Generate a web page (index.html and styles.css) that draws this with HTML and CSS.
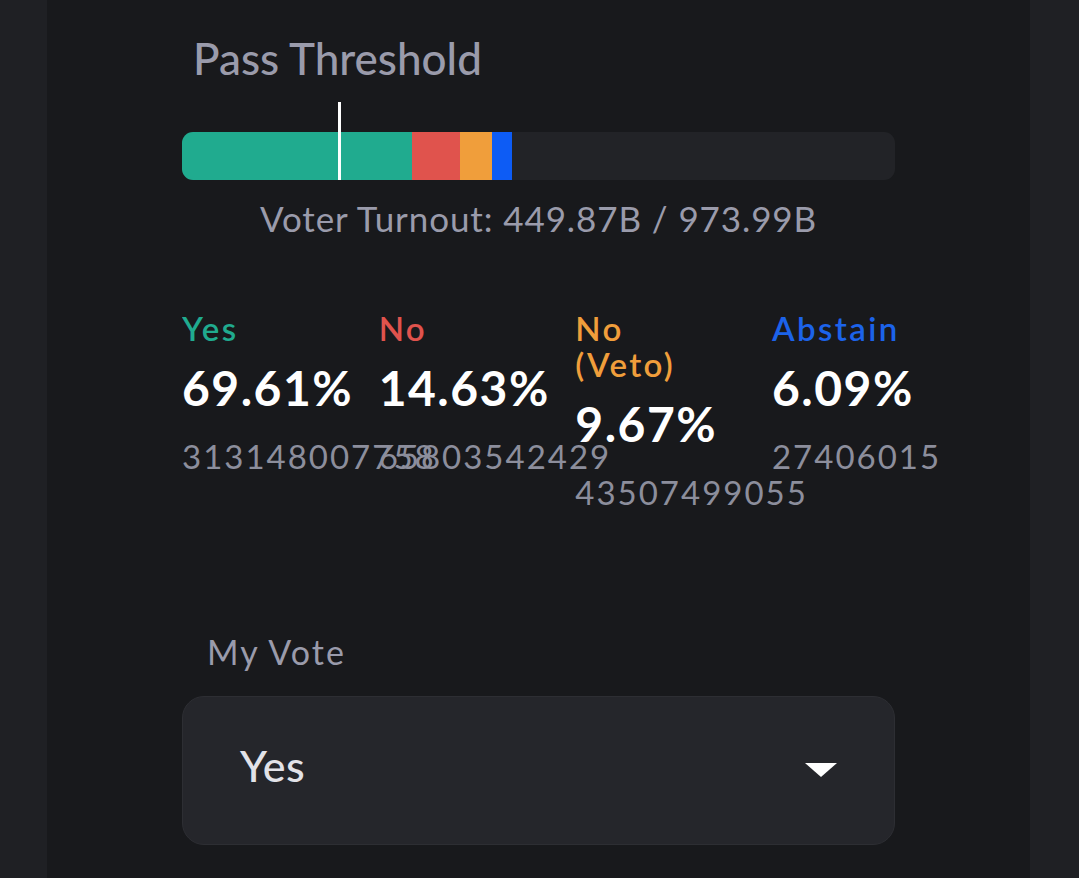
FILE: index.html
```html
<!DOCTYPE html>
<html>
<head>
<meta charset="utf-8">
<link rel="stylesheet" href="styles.css">
</head>
<body>
<div class="page">
  <div class="panel">
    <h2 class="threshold-title">Pass Threshold</h2>
    <div class="bar-wrap">
      <div class="bar">
        <div class="seg seg-yes" style="width:229.6px"></div>
        <div class="seg seg-no" style="width:48px"></div>
        <div class="seg seg-veto" style="width:32px"></div>
        <div class="seg seg-abstain" style="width:20px"></div>
      </div>
      <div class="threshold-line" style="left:156px"></div>
    </div>
    <div class="turnout">Voter Turnout: 449.87B / 973.99B</div>

    <div class="stats">
      <div class="stat">
        <div class="stat-label yes">Yes</div>
        <div class="stat-pct">69.61%</div>
        <div class="stat-num">313148007758</div>
      </div>
      <div class="stat">
        <div class="stat-label no">No</div>
        <div class="stat-pct">14.63%</div>
        <div class="stat-num">65803542429</div>
      </div>
      <div class="stat">
        <div class="stat-label veto">No<br>(Veto)</div>
        <div class="stat-pct">9.67%</div>
        <div class="stat-num">43507499055</div>
      </div>
      <div class="stat">
        <div class="stat-label abstain">Abstain</div>
        <div class="stat-pct">6.09%</div>
        <div class="stat-num">27406015715</div>
      </div>
    </div>

    <div class="vote-label">My Vote</div>
    <div class="select">
      <span class="select-value">Yes</span>
      <span class="caret"></span>
    </div>
  </div>
</div>
</body>
</html>
```

FILE: styles.css
```css
html, body {
  margin: 0;
  padding: 0;
  background: #1f2024;
  font-family: Lato, "Noto Sans", sans-serif;
}
.page {
  padding: 0 49px 0 47px;
  height: 878px;
  overflow: hidden;
}
.panel {
  background: #18191c;
  height: 878px;
  padding: 0 0 0 135px;
  box-sizing: border-box;
}
.threshold-title {
  margin: 0;
  padding: 32px 0 0 11px;
  font-size: 44px;
  line-height: 52px;
  font-weight: 500;
  color: #9a9bab;
}
.bar-wrap {
  position: relative;
  width: 713px;
  margin-top: 18px;
  padding-top: 30px;
}
.bar {
  display: flex;
  height: 48px;
  border-radius: 11px;
  overflow: hidden;
  background: #222327;
}
.seg { height: 100%; }
.seg-yes { background: #20ab8f; }
.seg-no { background: #e0534d; }
.seg-veto { background: #f09e3b; }
.seg-abstain { background: #0d5cf5; }
.threshold-line {
  position: absolute;
  top: 0;
  bottom: 0;
  width: 3px;
  background: #ffffff;
}
.turnout {
  width: 713px;
  text-align: center;
  margin-top: 18px;
  font-size: 35px;
  line-height: 40px;
  letter-spacing: 0.9px;
  color: #9a9bab;
}
.stats {
  display: grid;
  grid-template-columns: repeat(4, 170px);
  column-gap: 26.67px;
  width: 760px;
  overflow: hidden;
  margin-top: 71.7px;
  align-items: start;
}
.stat {
  min-width: 0;
}
.stat-label {
  font-size: 33px;
  line-height: 36px;
  font-weight: 600;
  letter-spacing: 2.4px;
}
.stat-label.yes { color: #20ab8f; }
.stat-label.no { color: #e0534d; }
.stat-label.veto { color: #f09e3b; }
.stat-label.abstain { color: #1c63ea; }
.stat-pct {
  margin-top: 14.7px;
  font-size: 48px;
  line-height: 56px;
  font-weight: 700;
  letter-spacing: 1.5px;
  color: #ffffff;
  white-space: nowrap;
}
.stat-num {
  margin-top: 21.8px;
  font-size: 33px;
  line-height: 36px;
  letter-spacing: 2px;
  color: #8c8e9c;
  white-space: nowrap;
}
.vote-label {
  margin-top: 121.8px;
  padding-left: 25px;
  font-size: 34px;
  line-height: 40px;
  letter-spacing: 2px;
  color: #9a9bab;
}
.select {
  margin-top: 24px;
  width: 713px;
  height: 149px;
  box-sizing: border-box;
  background: #25262b;
  border: 1px solid #2d2e33;
  border-radius: 22px;
  display: flex;
  align-items: center;
  justify-content: space-between;
  padding: 0 57px 0 57px;
}
.select-value {
  font-size: 43px;
  line-height: 52px;
  color: #e2e2e8;
  font-weight: 500;
  letter-spacing: 0.5px;
  margin-bottom: 8px;
}
.caret {
  width: 0;
  height: 0;
  border-left: 16px solid transparent;
  border-right: 16px solid transparent;
  border-top: 14px solid #ffffff;
}
```
